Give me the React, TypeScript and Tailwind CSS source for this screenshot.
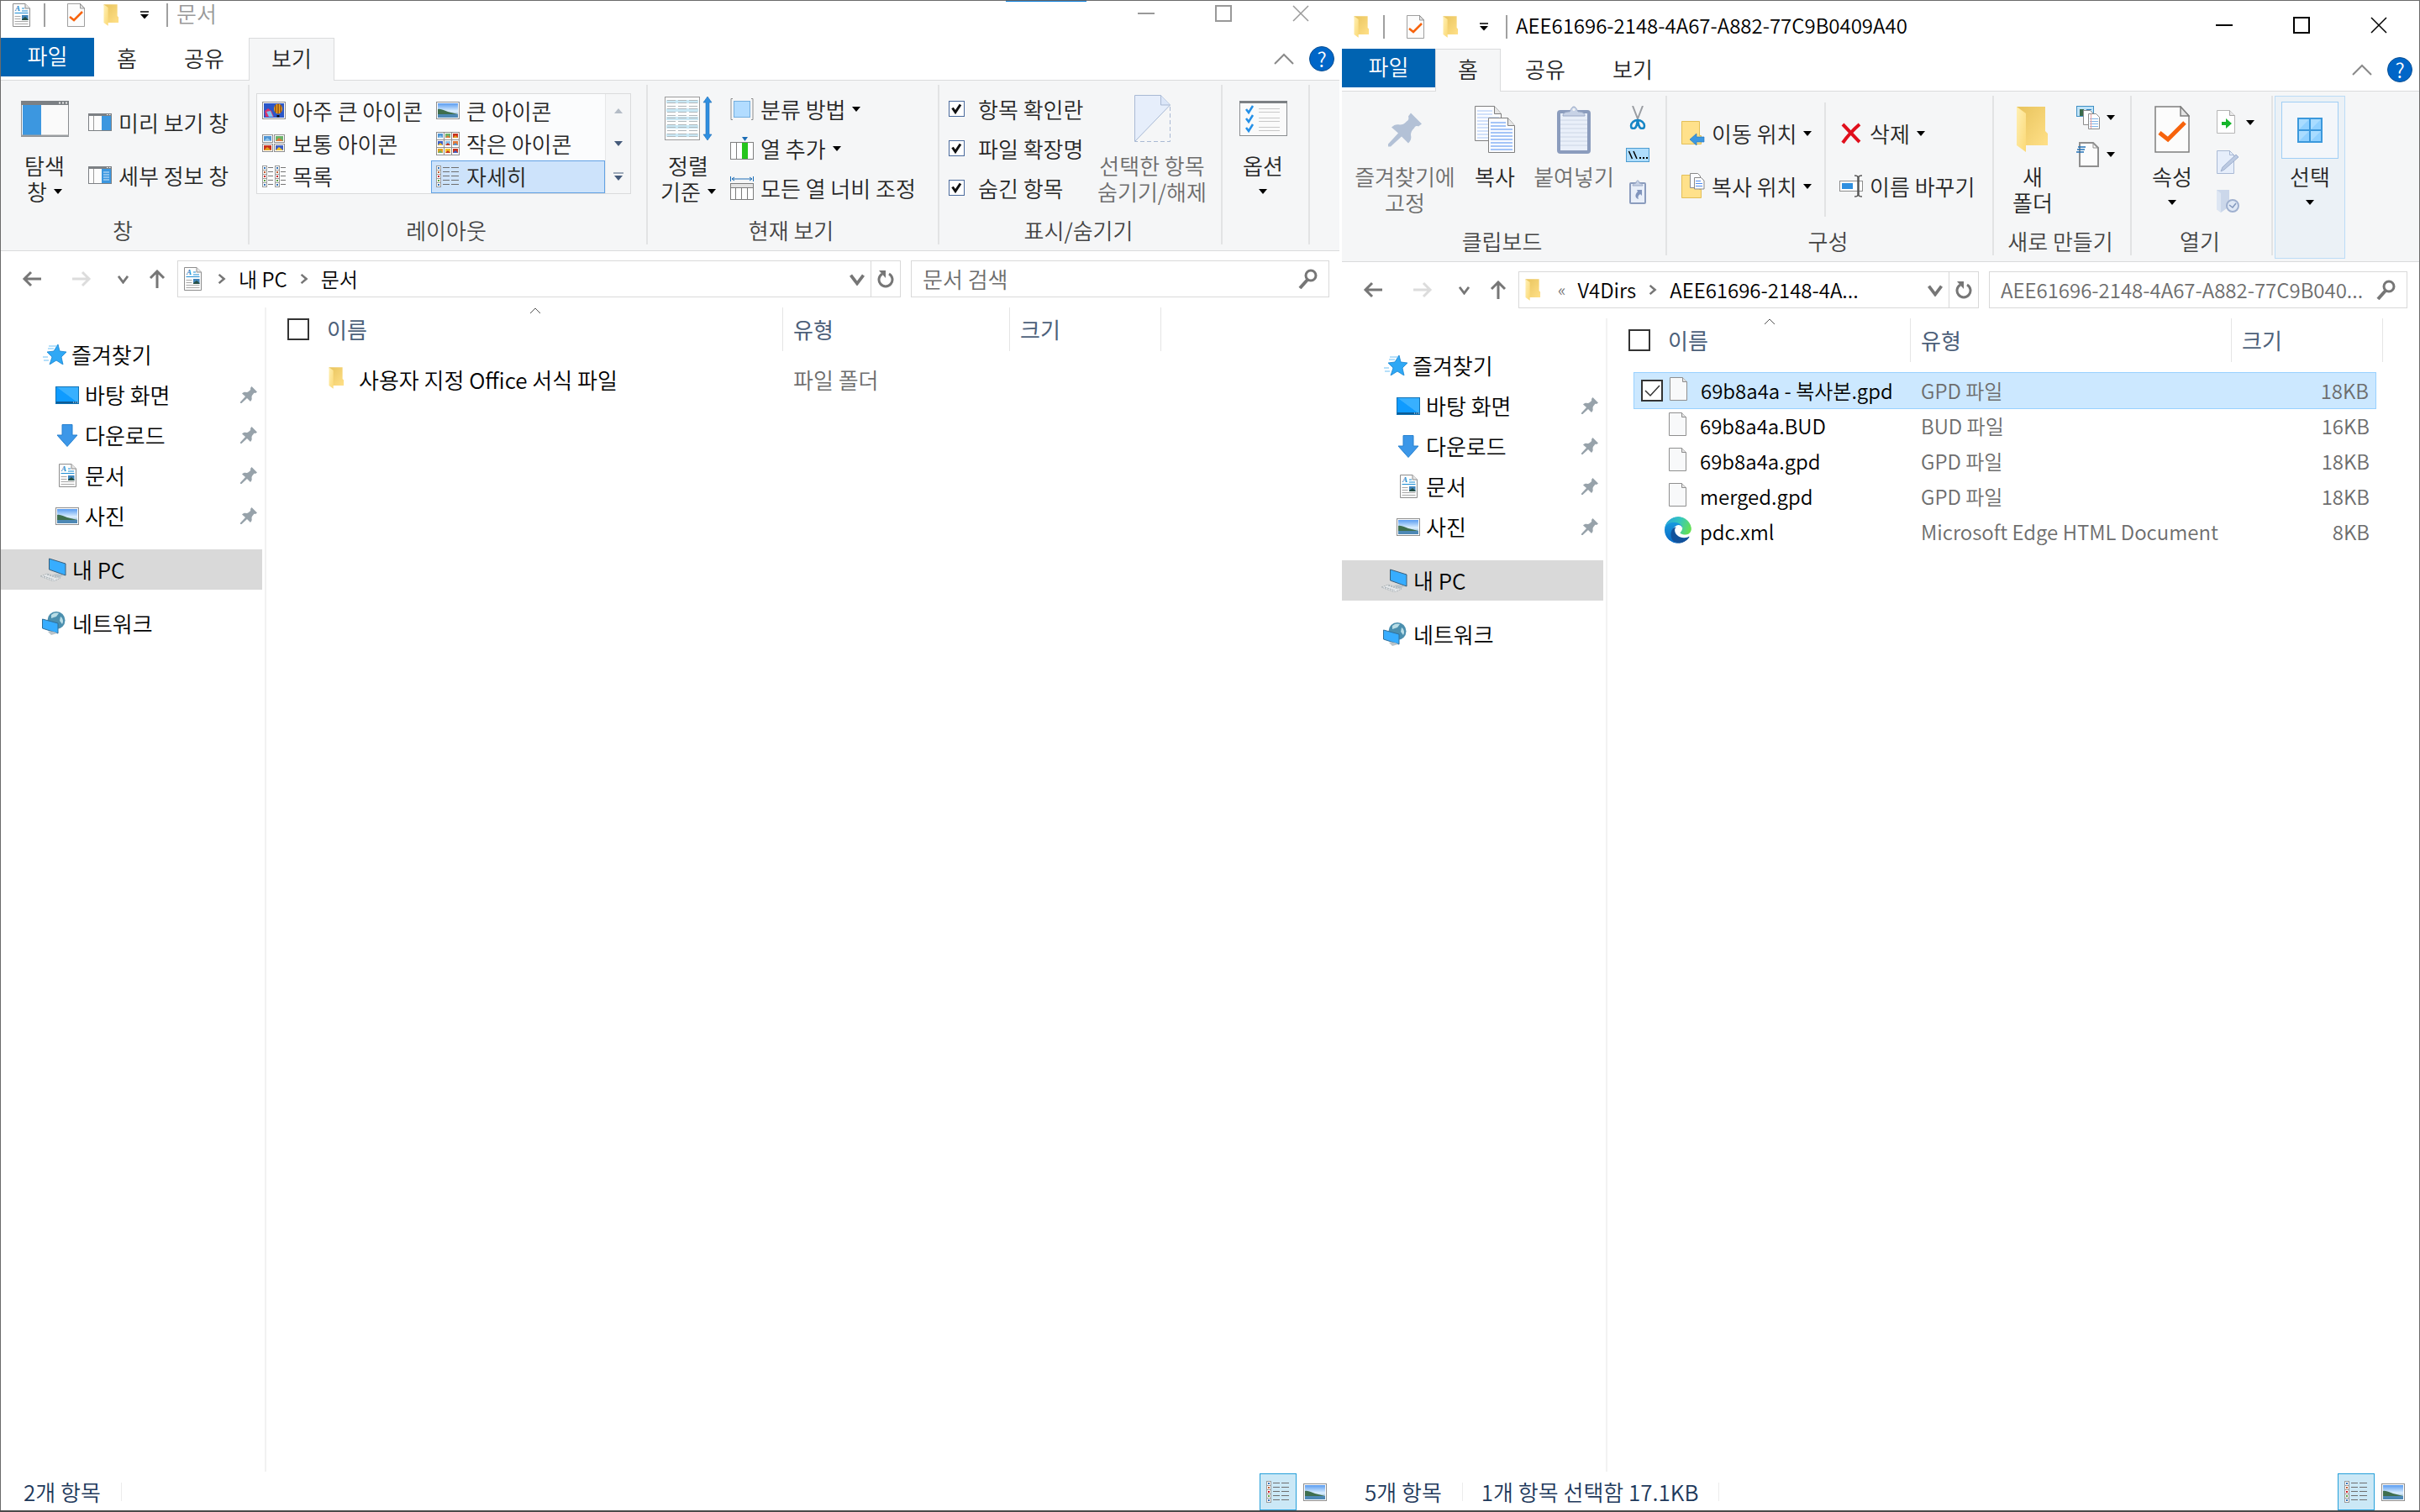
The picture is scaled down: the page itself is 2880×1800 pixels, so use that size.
import type { ReactNode } from "react"
import clsx from "clsx"

/* ---------- icons ---------- */

function Svg({ w, h, children }: { w: number; h: number; children: ReactNode }) {
  return (
    <svg width={w} height={h} viewBox={`0 0 ${w} ${h}`} fill="none" aria-hidden="true" className="shrink-0">
      {children}
    </svg>
  )
}

function Gradients() {
  return (
    <svg width="0" height="0" className="absolute" aria-hidden="true">
      <defs>
        <linearGradient id="sky" x1="0" y1="0" x2="0" y2="1">
          <stop offset="0" stopColor="#5a9cf0" />
          <stop offset="0.55" stopColor="#dcefff" />
          <stop offset="1" stopColor="#5f93bb" />
        </linearGradient>
        <linearGradient id="folder" x1="0" y1="0" x2="1" y2="1">
          <stop offset="0" stopColor="#e8c35c" />
          <stop offset="1" stopColor="#ffe088" />
        </linearGradient>
        <linearGradient id="flap" x1="0" y1="0" x2="1" y2="1">
          <stop offset="0" stopColor="#fff0b4" />
          <stop offset="1" stopColor="#fbd976" />
        </linearGradient>
        <linearGradient id="screen" x1="0" y1="1" x2="1" y2="0">
          <stop offset="0.5" stopColor="#0f9bff" />
          <stop offset="0.52" stopColor="#38b0ff" />
        </linearGradient>
        <linearGradient id="edge-top" x1="0" y1="0.3" x2="1" y2="0.6">
          <stop offset="0" stopColor="#2aa5dd" />
          <stop offset="0.5" stopColor="#35c7bd" />
          <stop offset="1" stopColor="#66e052" />
        </linearGradient>
        <linearGradient id="edge-body" x1="0" y1="0" x2="0" y2="1">
          <stop offset="0" stopColor="#1ba0e2" />
          <stop offset="1" stopColor="#0868c5" />
        </linearGradient>
        <clipPath id="edge-clip">
          <circle cx="128" cy="128" r="128" />
        </clipPath>
      </defs>
    </svg>
  )
}

function DocIcon() {
  return (
    <Svg w={21} h={28}>
      <path d="M.5.5H15L20.500 6V27.500H.5z" fill="#fdfdfd" stroke="#8d8d8d" />
      <path d="M15 .5V6h5.500" fill="#e8e8e8" stroke="#8d8d8d" />
      <text x="3" y="9" fontSize="9" fontStyle="italic" fontWeight="700" fontFamily="Liberation Serif, serif" fill="#1f86c9">
        A
      </text>
      <path d="M11 6h3M11 9h7M2.500 11.500h16" stroke="#1f8fd6" strokeWidth="1.2" />
      <path d="M2.500 15.500h7M2.500 18.500h7M2.500 21.500h16M2.500 24.500h16" stroke="#a9a9a9" />
      <rect x="11" y="14" width="7.500" height="6" fill="#3f83b8" />
      <path d="M11 19l4-3 3.500 3v1H11z" fill="#274f45" />
    </Svg>
  )
}

function CheckPageIcon({ w = 21, h = 28 }: { w?: number; h?: number }) {
  return (
    <svg width={w} height={h} viewBox="0 0 42 56" fill="none" aria-hidden="true" className="shrink-0">
      <path d="M1 1h30l10 11v43H1z" fill="#fcfcfc" stroke="#7f7f7f" strokeWidth="1.500" />
      <path d="M31 1v11h10z" fill="#e4e4e4" stroke="#7f7f7f" strokeWidth="1.500" />
      <path d="M6 32l10 8L36 20" stroke="#f7630c" strokeWidth="5" />
    </svg>
  )
}

function FolderIcon({ w = 19, h = 28 }: { w?: number; h?: number }) {
  return (
    <svg width={w} height={h} viewBox="0 0 40 56" fill="none" aria-hidden="true" className="shrink-0">
      <path d="M1 1h34v29l3 3v14H10z" fill="url(#folder)" />
      <path d="M1 1l11 8v46L1 47z" fill="url(#flap)" />
    </svg>
  )
}

function Caret() {
  return (
    <Svg w={10} h={6}>
      <path d="M0 0h10L5 6z" fill="#000" />
    </Svg>
  )
}

function QuickMenuIcon() {
  return (
    <Svg w={12} h={10}>
      <path d="M1 1h10" stroke="#000" strokeWidth="1.500" />
      <path d="M1 4h10L6 9.500z" fill="#000" />
    </Svg>
  )
}

function PaneIcon({ details }: { details?: boolean }) {
  return (
    <Svg w={28} h={21}>
      <rect x=".5" y=".5" width="27" height="20" fill="#fcfcfc" stroke="#7c8084" />
      <path d="M0 0h28v3H0z" fill="#7c8084" />
      <path d="M22 1.500h1.500M25 1.500h1.500" stroke="#fff" />
      <path d="M6.500 3v17" stroke="#9c9c9c" />
      <rect x="16" y="3" width="11" height="17" fill="#3c97e0" />
      {details && <path d="M18 7h7M18 10h7M18 13h7M18 16h7" stroke="#d5eafa" />}
    </Svg>
  )
}

function NavPaneIcon() {
  return (
    <Svg w={57} h={43}>
      <rect x=".5" y=".5" width="56" height="42" fill="#fafafa" stroke="#8a8d90" />
      <path d="M0 0h57v5H0z" fill="#7c8084" />
      <path d="M45 2.500h2M49 2.500h2M53 2.500h2" stroke="#e8e8e8" strokeWidth="2" />
      <rect x="2" y="5" width="22" height="36" fill="#3c97e0" />
      <path d="M0 41.500h57" stroke="#9a9da0" strokeWidth="2" />
    </Svg>
  )
}

function PhotoIcon() {
  return (
    <Svg w={28} h={21}>
      <rect x=".5" y=".5" width="27" height="20" fill="#fff" stroke="#8f8f8f" />
      <rect x="2" y="2" width="24" height="17" fill="url(#sky)" />
      <path d="M2 9c4-1 8 2 12 3l12 3H2z" fill="#3f6f4e" />
      <path d="M2 15h24v4H2z" fill="#4d88b5" />
    </Svg>
  )
}

function BalloonIcon() {
  return (
    <Svg w={28} h={21}>
      <rect x=".5" y=".5" width="27" height="20" fill="#fff" stroke="#8f8f8f" />
      <rect x="2" y="2" width="24" height="17" fill="#2a56c8" />
      <path d="M3 11l4-3 4 3 3 7H4z" fill="#d6336c" />
      <path d="M5 12l3 6h5l-3-7z" fill="#7cc4f2" />
      <ellipse cx="19" cy="8.500" rx="5" ry="6" fill="#f2a71b" />
      <path d="M19 2.500v12M16 4v9M22 4v9" stroke="#5a1c10" />
      <path d="M17.500 16h3v2.500h-3z" fill="#111" />
    </Svg>
  )
}

const thumbColors = ["#4f95d4", "#6bb36a", "#c8321e", "#3d5fc4", "#8fc4ea", "#e07a3a", "#e0a020", "#f2c230", "#c8321e"]

function MediumIcon() {
  return (
    <Svg w={28} h={21}>
      {[0, 1, 2, 3].map((i) => (
        <g key={i} transform={`translate(${(i % 2) * 14} ${Math.floor(i / 2) * 11})`}>
          <rect x=".5" y=".5" width="12" height="9" fill="#fff" stroke="#8f8f8f" />
          <rect x="2" y="2" width="9" height="6" fill={thumbColors[i]} />
          <path d="M2 8l4-4 5 4z" fill={thumbColors[i + 4]} />
        </g>
      ))}
    </Svg>
  )
}

function SmallGridIcon() {
  return (
    <Svg w={28} h={28}>
      <rect x=".5" y=".5" width="27" height="27" fill="#fff" stroke="#8f8f8f" />
      <path d="M9.500 0v28M18.500 0v28M0 9.500h28M0 18.500h28" stroke="#8f8f8f" />
      {thumbColors.map((color, i) => (
        <g key={i} transform={`translate(${(i % 3) * 9} ${Math.floor(i / 3) * 9})`}>
          <rect x="2" y="2" width="6" height="5" fill={color} />
          <path d="M2 7l3-3 3 3z" fill={thumbColors[(i + 4) % 9]} />
        </g>
      ))}
    </Svg>
  )
}

const bulletColors = ["#2f6fb5", "#c05a30", "#c8101c", "#56a040", "#2f6fb5"]

function Bullets({ x }: { x: number }) {
  return (
    <>
      <rect x={x + 0.5} y=".5" width="5" height="25" fill="#fff" stroke="#9a9a9a" />
      {bulletColors.map((color, i) => (
        <g key={i}>
          <path d={`M${x} ${i * 5 + 0.5}h6`} stroke="#9a9a9a" />
          <rect x={x + 2} y={i * 5 + 2} width="2" height="2" fill={color} />
        </g>
      ))}
    </>
  )
}

function ListIcon() {
  return (
    <Svg w={28} h={26}>
      <Bullets x={0} />
      <path d="M7 2.500h6M7 7.500h6M7 12.500h6M7 17.500h6M7 22.500h6" stroke="#777" />
      <Bullets x={15} />
      <path d="M22 2.500h6M22 7.500h6M22 12.500h6M22 17.500h6M22 22.500h6" stroke="#777" />
    </Svg>
  )
}

function DetailsIcon() {
  return (
    <Svg w={28} h={26}>
      <Bullets x={0} />
      <path
        d="M8 2.500h8M18 2.500h9M8 7.500h8M18 7.500h9M8 12.500h8M18 12.500h9M8 17.500h8M18 17.500h9M8 22.500h8M18 22.500h9"
        stroke="#6f6f6f"
      />
    </Svg>
  )
}

function SortIcon() {
  return (
    <Svg w={57} h={52}>
      <rect x=".5" y=".5" width="41" height="51" fill="#fcfcfc" stroke="#9b9b9b" />
      {[6, 16, 26, 36, 46].map((y) => (
        <path key={y} d={`M2 ${y}h38`} stroke="#c9e8f5" strokeWidth="4" />
      ))}
      {[4, 7, 11, 14, 18, 22, 25, 29, 33, 36, 40, 44, 47].map((y) => (
        <path key={y} d={`M3 ${y}.500h10M16 ${y}.500h10M29 ${y}.500h10`} stroke="#b0b8bc" />
      ))}
      <path d="M51 0l5 7h-3v38h3l-5 7-5-7h3V7h-3z" fill="#2f8fe0" stroke="#1c6db5" strokeWidth=".6" />
    </Svg>
  )
}

function GroupByIcon() {
  return (
    <Svg w={28} h={26}>
      <path d="M3 .5H1v25h2M25 .5h2v25h-2" stroke="#8c8c8c" />
      <rect x="4.500" y="3.500" width="19" height="19" fill="#b2dcff" stroke="#74aede" />
    </Svg>
  )
}

function AddColumnIcon() {
  return (
    <Svg w={28} h={27}>
      <path d="M14 0h7l-3.500 5z" fill="#1c6db5" />
      <rect x=".5" y="6.500" width="27" height="20" fill="#fff" stroke="#808080" />
      <path d="M7.500 7v19" stroke="#808080" />
      <rect x="14" y="7" width="7" height="19" fill="#25c51c" />
    </Svg>
  )
}

function FitColumnsIcon() {
  return (
    <Svg w={28} h={28}>
      <path d="M.5 0v6M27.500 0v6M2 3h24M5 1L2 3l3 2M23 1l3 2-3 2" stroke="#1c6db5" />
      <rect x=".5" y="8.500" width="27" height="19" fill="#fff" stroke="#7c7c7c" />
      <path d="M1 9h26v4H1z" fill="#e3e3e3" />
      <path d="M0 13.500h28M6.500 14v13M13.500 14v13M20.500 14v13" stroke="#7c7c7c" />
    </Svg>
  )
}

function HidePageIcon() {
  return (
    <Svg w={43} h={56}>
      <path d="M.5.5h31l11 11.500L.5 55.500z" fill="#e6eefb" stroke="#a9b9d4" />
      <path d="M31.500.5V12h11" fill="#dbe6f8" stroke="#a9b9d4" />
      <path d="M42.500 14v41.500H1" stroke="#a9b9d4" strokeDasharray="5 3" />
    </Svg>
  )
}

function OptionsIcon() {
  return (
    <Svg w={57} h={42}>
      <rect x=".5" y=".5" width="56" height="41" fill="#fafafa" stroke="#8a8d90" />
      <path d="M0 0h57v3H0z" fill="#7c8084" />
      {[10, 21, 32].map((y) => (
        <g key={y}>
          <path d={`M8 ${y}l3 4 5-8`} stroke="#2490e8" strokeWidth="2.500" />
          <path d={`M23 ${y - 1}.500h25M23 ${y + 3}.500h25`} stroke="#c8c8c8" />
        </g>
      ))}
    </Svg>
  )
}

function PinShape({ w, h, color }: { w: number; h: number; color: string }) {
  return (
    <svg width={w} height={h} viewBox="0 0 40 40" aria-hidden="true" className="shrink-0">
      <path
        d="M27 0l13 13-4 3c-3-1-4 0-5 2-3 3-4 5-4 8 1 4 0 7-3 10l-8-8L3 40H0v-3l12-13-8-7c3-3 6-4 10-3 3 0 5-1 8-4 2-1 3-3 2-6z"
        fill={color}
      />
    </svg>
  )
}

function CopyIcon() {
  return (
    <Svg w={48} h={56}>
      <path d="M.5.5h23l8 9v32H.5z" fill="#fbfcff" stroke="#7f7f7f" />
      <path d="M23.500.5v9h8" fill="#e6e6e6" stroke="#7f7f7f" />
      <path d="M3 6h18M3 10h18M3 14h26M3 18h26M3 22h13M3 26h13M3 30h13M3 34h13M3 38h13" stroke="#a7c5f5" />
      <path d="M16.500 14.500h23l8 9v32h-31z" fill="#fbfcff" stroke="#7f7f7f" />
      <path d="M39.500 14.500v9h8" fill="#e6e6e6" stroke="#7f7f7f" />
      <path d="M19 20h18M19 24h18M19 28h26M19 32h26M19 36h26M19 40h26M19 44h26M19 48h26M19 52h26" stroke="#4f8df0" />
    </Svg>
  )
}

function PasteIcon() {
  return (
    <Svg w={40} h={57}>
      <rect x="2" y="7" width="36" height="48" rx="2" fill="#e9eff9" stroke="#8b9cbd" strokeWidth="4" />
      <path d="M4 17h32M4 22h32M4 27h32M4 32h32M4 37h32M4 42h32M4 47h32" stroke="#ccd6e6" />
      <path d="M7 12c0-4 4-5 8-5 1-1 2-6 5-6s4 5 5 6c4 0 8 1 8 5z" fill="#c7d2e6" stroke="#9aa9c6" />
      <circle cx="20" cy="4.500" r="1.500" fill="#f5f6f7" />
    </Svg>
  )
}

function ScissorsIcon() {
  return (
    <Svg w={20} h={28}>
      <path d="M4 0l7 18M16 0L9 18" stroke="#9a9da2" strokeWidth="2" />
      <path d="M10 17c-4 0-8 3-8 7 0 2 1 3 3 3 4 0 4-6 5-10 1 4 1 10 5 10 2 0 3-1 3-3 0-4-4-7-8-7z" stroke="#1585c5" strokeWidth="2.500" />
    </Svg>
  )
}

function CopyPathIcon() {
  return (
    <Svg w={28} h={17}>
      <rect x=".5" y=".5" width="27" height="16" fill="#aeddfc" stroke="#4c9bd0" />
      <path d="M3.500 4l4 9M9 4l4 9" stroke="#000" strokeWidth="1.500" />
      <path d="M16 12h2M20 12h2M24 12h2" stroke="#000" strokeWidth="2" />
    </Svg>
  )
}

function PasteShortcutIcon() {
  return (
    <Svg w={20} h={29}>
      <rect x="1" y="4" width="18" height="24" rx="1" fill="#e9eff9" stroke="#8b9cbd" strokeWidth="2" />
      <path d="M4 7c0-2 3-3 4-3 0-2 1-3 2-3s2 1 2 3c1 0 4 1 4 3z" fill="#c7d2e6" stroke="#9aa9c6" />
      <path d="M9 12h6v7l-2-2c-3 2-3 4-2 6-4-1-5-5-1-9z" fill="#8195bd" />
    </Svg>
  )
}

function MoveToIcon() {
  return (
    <Svg w={28} h={29}>
      <path d="M.5.500h21v17h2v10H.5z" fill="#ffe18b" stroke="#e3bf57" />
      <path d="M10 22l8-7v4h9v6h-9v4z" fill="#3c97e0" stroke="#1f73bd" strokeWidth=".6" />
    </Svg>
  )
}

function CopyToIcon() {
  return (
    <Svg w={28} h={31}>
      <path d="M.5 2.500h21v17h2v10H.5z" fill="#ffe18b" stroke="#e3bf57" />
      <path d="M10.500.5h9l3 3v14h-12z" fill="#fbfcff" stroke="#888" />
      <path d="M15.500 5.500h8l3.500 3.500v10H15.500z" fill="#fbfcff" stroke="#888" />
      <path d="M17 9.500h6M17 12.500h8M17 15.500h8" stroke="#4f8df0" />
    </Svg>
  )
}

function DeleteIcon() {
  return (
    <Svg w={28} h={26}>
      <path d="M4 2c5 5 14 15 20 21M24 2C17 8 9 17 4 24" stroke="#e00f1c" strokeWidth="4" />
    </Svg>
  )
}

function RenameIcon() {
  return (
    <Svg w={28} h={27}>
      <rect x=".5" y="7.500" width="27" height="12" fill="#fff" stroke="#8c8c8c" />
      <rect x="3" y="10" width="13" height="7" fill="#2f8fe0" />
      <path d="M18 1c3 0 4 1 4 2v21c0 1-1 2-4 2M27 1c-3 0-4 1-4 2v21c0 1 1 2 4 2" stroke="#555" strokeWidth="1.500" />
    </Svg>
  )
}

function NewItemIcon() {
  return (
    <Svg w={28} h={28}>
      <rect x=".5" y=".5" width="20" height="12" fill="#bfe3f8" stroke="#3f8fc4" />
      <path d="M4 4h5v8H4z" fill="#3b6b4a" />
      <path d="M12 4.500h6" stroke="#2a7fc0" />
      <path d="M8.500 5.500h8l4 4v13h-12z" fill="#fff" stroke="#8c8c8c" />
      <path d="M14.500 9.500h9l4 4v14h-13z" fill="#fff" stroke="#8c8c8c" />
      <path d="M16 15.500h10M16 18.500h10M16 21.500h10M16 24.500h10" stroke="#7fb2e6" />
      <path d="M17.500 10v17" stroke="#eca0a0" />
    </Svg>
  )
}

function EasyAccessIcon() {
  return (
    <Svg w={28} h={30}>
      <path d="M4 1h16l6 6v22H4z" fill="#fcfcfc" stroke="#8f8f8f" strokeWidth="2" />
      <path d="M20 1v6h6" stroke="#8f8f8f" />
      <path d="M2 6h9M1 9h9M0 12h9" stroke="#2272b8" strokeWidth="1.500" />
    </Svg>
  )
}

function OpenIcon() {
  return (
    <Svg w={28} h={29}>
      <path d="M1.500.5h15l6 6v21h-21z" fill="#fff" stroke="#b5b5b5" />
      <path d="M16.500.5v6h6" fill="#e8e8e8" stroke="#a5a5a5" />
      <path d="M7 14h5v-4l7 6-7 6v-4H7z" fill="#16b52b" />
    </Svg>
  )
}

function EditIcon() {
  return (
    <Svg w={28} h={28}>
      <path d="M1.500.5h15l5 5v22h-20z" fill="#e6eefb" stroke="#a9b9d4" />
      <path d="M16.500.5v5h5" stroke="#a9b9d4" />
      <path d="M6 25l2-5L24 5l3 3L10 23z" fill="#bccae2" stroke="#9fb0cf" />
    </Svg>
  )
}

function HistoryIcon() {
  return (
    <Svg w={28} h={28}>
      <path d="M1 0h15v20l-10 7-5-4z" fill="#cbd7ea" />
      <path d="M1 0l5 4v23l-5-4z" fill="#dde6f3" />
      <circle cx="20" cy="19" r="7" fill="#dfe8f5" stroke="#9fb0cf" strokeWidth="2" />
      <path d="M16 18l4 3 4-5" stroke="#8297bd" strokeWidth="1.500" />
    </Svg>
  )
}

function SelectIcon() {
  return (
    <Svg w={30} h={30}>
      <rect width="30" height="30" fill="#3b98dc" />
      <path d="M2 2h12v12H2zM16 2h12v12H16zM2 16h12v12H2zM16 16h12v12H16z" fill="#a9dcff" />
      <path d="M2 14L14 2v12zM16 14L28 2v12zM2 28l12-12v12zM16 28l12-12v12z" fill="#8fd0ff" />
    </Svg>
  )
}

function StarIcon() {
  return (
    <Svg w={28} h={24}>
      <path d="M18 0l2 8 8 1-6 6 2 9-8-5-8 5 3-9-6-6 8-1z" fill="#2fa8f5" stroke="#1583d0" strokeWidth=".8" />
      <path d="M7 2h10M6 5h7M0 15h6M1 19h6" stroke="#6cc0f5" />
    </Svg>
  )
}

function DesktopIcon() {
  return (
    <Svg w={28} h={21}>
      <rect x=".5" y=".5" width="27" height="20" fill="url(#screen)" stroke="#1072b5" />
      <path d="M1 19h26" stroke="#0c5c96" strokeWidth="2" />
      <path d="M21 19h1M23.500 19h1M26 19h1" stroke="#fff" />
    </Svg>
  )
}

function DownloadIcon() {
  return (
    <Svg w={28} h={27}>
      <path d="M8 .5h12V13h6L14 26.500 2 13h6z" fill="#3c97e8" stroke="#2680cf" />
    </Svg>
  )
}

function PcIcon() {
  return (
    <Svg w={32} h={28}>
      <path d="M10.500 1l19.500 6v14L10.500 14z" fill="#37adff" stroke="#3b5f7a" />
      <path d="M11 14L30 1v6L11 14z" fill="#5cbcff" opacity="0" />
      <path d="M15 20c5-2 10 0 13 1l-7 3z" fill="#b9c3c9" />
      <path d="M0 22l8-3 16 5-8 4z" fill="#e4e7e9" stroke="#9ea6ab" strokeWidth=".8" strokeDasharray="2 1" />
      <path d="M4 22l12 4M8 20l12 4" stroke="#a2aaaf" strokeDasharray="2 1" />
    </Svg>
  )
}

function NetworkIcon() {
  return (
    <Svg w={30} h={28}>
      <ellipse cx="17" cy="10.500" rx="10.500" ry="10.500" fill="#4b8fae" />
      <path d="M11 4c3-3 7-3 9-2l-3 4-6 2zM22 6c3 2 4 6 2 9l-3-4z" fill="#b9dde6" />
      <path d="M.5 9L19 14v12L.5 20z" fill="#37adff" stroke="#2f6f9a" />
      <path d="M7 24c4-1 9 0 11 2l-7 2z" fill="#b9c3c9" />
    </Svg>
  )
}

function FileIcon() {
  return (
    <Svg w={21} h={28}>
      <path d="M.5.500h15l5 5v22H.5z" fill="#f8f9fa" stroke="#8f8f8f" />
      <path d="M15.500.5v5h5" fill="#e3e3e3" stroke="#8f8f8f" />
    </Svg>
  )
}

function EdgeIcon() {
  return (
    <svg width="32" height="32" viewBox="0 0 256 256" aria-hidden="true" className="shrink-0">
      <g clipPath="url(#edge-clip)">
        <path
          d="M105.700 241.400a79.200 79.200 0 0 1-22.700-21.300c-29.700-40.600-20.800-97.700 19.900-127.400 4.300-3.100 8.700-5.700 13.400-8 3.400-1.600 9.300-4.600 17.100-4.500 11.200.1 21.600 5.400 28.300 14.300 4.400 5.900 6.900 13.100 7 20.600 0-.2 27-87.800-87.900-87.800-48.300 0-88 45.900-88 86.100-.2 21.300 4.300 42.400 13.300 61.700 30 63.900 102.500 94.900 169.400 72.600a84.200 84.200 0 0 1-69.800-6.300z"
          fill="url(#edge-body)"
        />
        <path
          d="M231 190.500c-3.400 1.800-6.900 3.400-10.500 4.700a101.300 101.300 0 0 1-35.600 6.400c-47 0-87.900-32.300-87.900-73.800.1-11.300 6.300-21.700 16.300-27.100-42.500 1.800-53.400 46.100-53.400 72 0 73.400 67.600 80.800 82.200 80.800 7.900 0 19.700-2.300 26.800-4.600l1.300-.4a127.700 127.700 0 0 0 66.500-52.800c1-1.500.4-3.600-1.100-4.500-1.400-.8-3.100-.8-4.600-.7z"
          fill="#12529c"
        />
        <path
          d="M152.300 148.900c-.9 1.200-3.600 2.700-3.600 6.100 0 2.800 1.800 5.500 5.100 7.700 15.300 10.700 44.200 9.200 44.300 9.200 11.400 0 22.500-3.100 32.200-8.900C246 154 256 132 256 107c.2-24-8.500-39.900-12.100-46.900C221 15.600 178 0 128 0A128 128 0 0 0 0 126.200c.5-40.200 40.500-72.700 88-72.700 3.900 0 25.800.4 46.200 11.100 18 9.400 27.400 20.800 33.900 32.100 6.800 11.700-5 40-15.800 52.200z"
          fill="url(#edge-top)"
        />
      </g>
    </svg>
  )
}

function Chevron({ dir, w, h }: { dir: "down" | "right"; w: number; h: number }) {
  const d = { down: "M1 2l6 8 6-8", right: "M3 0l7 6-7 6" }[dir]
  return (
    <svg width={w} height={h} viewBox="0 0 14 12" fill="none" aria-hidden="true" className="shrink-0">
      <path d={d} stroke="#767676" strokeWidth="3" />
    </svg>
  )
}

function ArrowIcon({ dir, color = "#767676" }: { dir: "left" | "right" | "up"; color?: string }) {
  const d = {
    left: "M11 3l-8 8 8 8M3 11h20",
    right: "M13 3l8 8-8 8M1 11h20",
    up: "M4 10l8-8 8 8M12 2v20",
  }[dir]
  return (
    <Svg w={24} h={22}>
      <path d={d} stroke={color} strokeWidth="3" />
    </Svg>
  )
}

/* ---------- ribbon parts ---------- */

function BigButton({
  icon,
  lines,
  caret,
  disabled,
  className,
}: {
  icon: ReactNode
  lines: string[]
  caret?: "inline" | "below"
  disabled?: boolean
  className?: string
}) {
  return (
    <button type="button" className={clsx("flex shrink-0 flex-col items-center", disabled ? "text-[#6d6d6d]" : "text-[#262626]", className)}>
      <span className="flex h-20 items-center">{icon}</span>
      {lines.map((line, i) => (
        <span key={line} className="flex items-center gap-2 leading-[31px] whitespace-nowrap">
          {line}
          {caret === "inline" && i === lines.length - 1 && <Caret />}
        </span>
      ))}
      {caret === "below" && (
        <span className="flex h-[31px] items-center">
          <Caret />
        </span>
      )}
    </button>
  )
}

function SmallButton({ icon, label, caret, className }: { icon: ReactNode; label: string; caret?: boolean; className?: string }) {
  return (
    <button type="button" className={clsx("flex shrink-0 items-center gap-2 whitespace-nowrap text-[#262626]", className)}>
      {icon}
      {label}
      {caret && <Caret />}
    </button>
  )
}

function IconButton({ icon, label, caret, className }: { icon: ReactNode; label: string; caret?: boolean; className?: string }) {
  return (
    <button type="button" aria-label={label} className={clsx("flex items-center gap-2", className)}>
      {icon}
      {caret && <Caret />}
    </button>
  )
}

function Group({ label, className, children }: { label?: string; className?: string; children: ReactNode }) {
  return (
    <div className={clsx("flex h-[190px] shrink-0 flex-col border-r-2 border-[#e2e3e4]", className)}>
      <div className="flex min-h-0 flex-1">{children}</div>
      <div className="h-[34px] pr-1 text-center leading-[34px] text-[#444]">{label}</div>
    </div>
  )
}

function RibbonCheck({ label }: { label: string }) {
  return (
    <label className="flex h-[47px] items-center gap-4 whitespace-nowrap text-[#262626]">
      <span className="grid place-items-center">
        <input type="checkbox" defaultChecked className="col-start-1 row-start-1 size-[19px] appearance-none border border-[#4a6a9c] bg-white" />
        <svg width="19" height="19" viewBox="0 0 19 19" fill="none" aria-hidden="true" className="pointer-events-none col-start-1 row-start-1">
          <path d="M4.500 8.500l3.500 5 6-9" stroke="#111" strokeWidth="3" />
        </svg>
      </span>
      {label}
    </label>
  )
}

const galleryItems = [
  { label: "아주 큰 아이콘", icon: <BalloonIcon /> },
  { label: "큰 아이콘", icon: <PhotoIcon /> },
  { label: "보통 아이콘", icon: <MediumIcon /> },
  { label: "작은 아이콘", icon: <SmallGridIcon /> },
  { label: "목록", icon: <ListIcon /> },
  { label: "자세히", icon: <DetailsIcon />, active: true },
]

function ViewRibbon() {
  return (
    <>
      <Group label="창" className="w-[296px]">
        <BigButton icon={<NavPaneIcon />} lines={["탐색", "창"]} caret="inline" className="ml-2 w-[88px]" />
        <div className="flex flex-col pt-[13px] pl-2">
          <SmallButton icon={<PaneIcon />} label="미리 보기 창" className="h-[63px]" />
          <SmallButton icon={<PaneIcon details />} label="세부 정보 창" className="h-[63px]" />
        </div>
      </Group>
      <Group label="레이아웃" className="w-[474px]">
        <div className="mt-[10px] ml-2 flex h-[120px] w-[446px] border border-[#dadbdc] bg-[#fbfcfd]">
          <div className="grid flex-1 grid-cols-2 grid-rows-3">
            {galleryItems.map(({ label, icon, active }) => (
              <button
                type="button"
                key={label}
                className={clsx(
                  "flex items-center gap-2 border pl-[5px] whitespace-nowrap text-[#262626]",
                  active ? "border-[#62a2e4] bg-[#cde3fb]" : "border-transparent"
                )}
              >
                {icon}
                {label}
              </button>
            ))}
          </div>
          <div className="grid w-[30px] grid-rows-3 border-l border-[#e6e7e8] bg-[#f5f6f7]">
            <button type="button" aria-label="위로" className="grid place-items-center">
              <Svg w={10} h={6}>
                <path d="M0 6h10L5 0z" fill="#b4bcc6" />
              </Svg>
            </button>
            <button type="button" aria-label="아래로" className="grid place-items-center">
              <Svg w={10} h={6}>
                <path d="M0 0h10L5 6z" fill="#445a7a" />
              </Svg>
            </button>
            <button type="button" aria-label="자세히 보기" className="grid place-items-center">
              <Svg w={12} h={10}>
                <path d="M0 1h12" stroke="#445a7a" />
                <path d="M1 4h10L6 10z" fill="#445a7a" />
              </Svg>
            </button>
          </div>
        </div>
      </Group>
      <Group label="현재 보기" className="w-[347px]">
        <BigButton icon={<SortIcon />} lines={["정렬", "기준"]} caret="inline" className="ml-1 w-[88px]" />
        <div className="flex flex-col pt-[5px] pl-[6px]">
          <SmallButton icon={<GroupByIcon />} label="분류 방법" caret className="h-[47px]" />
          <SmallButton icon={<AddColumnIcon />} label="열 추가" caret className="h-[47px]" />
          <SmallButton icon={<FitColumnsIcon />} label="모든 열 너비 조정" className="h-[47px]" />
        </div>
      </Group>
      <Group label="표시/숨기기" className="w-[337px]">
        <div className="flex w-[178px] flex-col pt-[5px] pl-[11px]">
          <RibbonCheck label="항목 확인란" />
          <RibbonCheck label="파일 확장명" />
          <RibbonCheck label="숨긴 항목" />
        </div>
        <BigButton icon={<HidePageIcon />} lines={["선택한 항목", "숨기기/해제"]} disabled className="w-[150px]" />
      </Group>
      <Group className="w-[104px]">
        <BigButton icon={<OptionsIcon />} lines={["옵션"]} caret="below" className="w-[96px]" />
      </Group>
    </>
  )
}

function HomeRibbon() {
  return (
    <>
      <Group label="클립보드" className="w-[387px]">
        <BigButton icon={<PinShape w={40} h={41} color="#b3c1d6" />} lines={["즐겨찾기에", "고정"]} disabled className="ml-3 w-[126px]" />
        <BigButton icon={<CopyIcon />} lines={["복사"]} className="w-[88px]" />
        <BigButton icon={<PasteIcon />} lines={["붙여넣기"]} disabled className="w-[100px]" />
        <div className="flex w-[52px] flex-col items-center pt-1">
          <IconButton icon={<ScissorsIcon />} label="잘라내기" className="h-11" />
          <IconButton icon={<CopyPathIcon />} label="경로 복사" className="h-11" />
          <IconButton icon={<PasteShortcutIcon />} label="바로 가기 붙여넣기" className="h-11" />
        </div>
      </Group>
      <Group label="구성" className="w-[389px]">
        <div className="mt-2 flex h-[136px] w-[189px] flex-col border-r-2 border-[#e2e3e4] pt-[5px] pl-[17px]">
          <SmallButton icon={<MoveToIcon />} label="이동 위치" caret className="h-[63px]" />
          <SmallButton icon={<CopyToIcon />} label="복사 위치" caret className="h-[63px]" />
        </div>
        <div className="flex flex-col pt-[13px] pl-4">
          <SmallButton icon={<DeleteIcon />} label="삭제" caret className="h-[63px]" />
          <SmallButton icon={<RenameIcon />} label="이름 바꾸기" className="h-[63px]" />
        </div>
      </Group>
      <Group label="새로 만들기" className="w-[164px]">
        <BigButton icon={<FolderIcon w={40} h={56} />} lines={["새", "폴더"]} className="w-[92px]" />
        <div className="flex flex-col pt-1 pl-[6px]">
          <IconButton icon={<NewItemIcon />} label="새 항목" caret className="h-11" />
          <IconButton icon={<EasyAccessIcon />} label="빠른 연결" caret className="h-11" />
        </div>
      </Group>
      <Group label="열기" className="w-[168px]">
        <BigButton icon={<CheckPageIcon w={42} h={56} />} lines={["속성"]} caret="below" className="ml-[2px] w-[92px]" />
        <div className="flex flex-col pt-2 pl-[6px]">
          <IconButton icon={<OpenIcon />} label="열기" caret className="h-[47px]" />
          <IconButton icon={<EditIcon />} label="편집" className="h-[47px]" />
          <IconButton icon={<HistoryIcon />} label="히스토리" className="h-[47px]" />
        </div>
      </Group>
      <button
        type="button"
        className="ml-[2px] flex h-[194px] w-[84px] shrink-0 flex-col items-center border border-[#bcdcf6] bg-[#ebf1f6] pt-[6px] leading-[31px] text-[#262626]"
      >
        <span className="grid size-[68px] place-items-center border border-[#a0cef5] bg-[#f3f6fa]">
          <SelectIcon />
        </span>
        <span className="pt-[5px]">선택</span>
        <span className="flex h-[31px] items-center">
          <Caret />
        </span>
      </button>
    </>
  )
}

/* ---------- window parts ---------- */

function TitleBar({ icon, title, active }: { icon: ReactNode; title: string; active?: boolean }) {
  const stroke = active ? "#000" : "#999"
  return (
    <header className={clsx("flex shrink-0 items-center pr-[38px] pl-[14px]", active ? "h-[57px] pt-1" : "h-11 pb-[10px]")}>
      {icon}
      <span className="ml-4 h-7 w-[2px] bg-[#a0a0a0]" />
      <span className="ml-[26px]">
        <CheckPageIcon />
      </span>
      <span className="ml-[22px]">
        <FolderIcon />
      </span>
      <button type="button" aria-label="빠른 실행 도구 모음 사용자 지정" className="ml-6">
        <QuickMenuIcon />
      </button>
      <span className="ml-5 h-7 w-[2px] bg-[#a0a0a0]" />
      <h1 className={clsx("ml-[10px] pb-1 whitespace-nowrap", active ? "text-[24px] text-black" : "text-[#999]")}>{title}</h1>
      <div className="ml-auto flex items-center gap-[72px] pb-1">
        <button type="button" aria-label="최소화">
          <Svg w={20} h={20}>
            <path d="M0 10h20" stroke={stroke} strokeWidth="2" />
          </Svg>
        </button>
        <button type="button" aria-label="최대화">
          <Svg w={20} h={20}>
            <path d="M1 1h18v18H1z" stroke={stroke} strokeWidth="2" />
          </Svg>
        </button>
        <button type="button" aria-label="닫기">
          <Svg w={20} h={20}>
            <path d="M1 1l18 18M19 1L1 19" stroke={stroke} strokeWidth="1.500" />
          </Svg>
        </button>
      </div>
    </header>
  )
}

const tabs = [
  { label: "홈", width: "w-[78px]" },
  { label: "공유", width: "w-[106px]" },
  { label: "보기", width: "w-[102px]" },
]

function TabBar({ current }: { current: string }) {
  return (
    <nav className="relative z-10 -mb-px flex h-[51px] shrink-0 items-start pr-2">
      <button type="button" className="h-[46px] w-[111px] bg-[#0063b1] pb-1 text-white">
        파일
      </button>
      {tabs.map(({ label, width }) => (
        <button
          type="button"
          key={label}
          className={clsx(
            "h-[51px] border border-b-0 pb-1 text-[#262626]",
            width,
            label === current ? "border-[#dadbdc] bg-[#f5f6f7]" : "border-transparent"
          )}
        >
          {label}
        </button>
      ))}
      <div className="mt-[10px] ml-auto flex items-center gap-[18px]">
        <button type="button" aria-label="리본 최소화">
          <Svg w={24} h={16}>
            <path d="M1 14L12 3l11 11" stroke="#8a8a8a" strokeWidth="2" />
          </Svg>
        </button>
        <button type="button" aria-label="도움말" className="size-[30px] rounded-full border border-[#0a4f92] bg-[#0066c8] text-[24px] leading-[26px] text-white">
          ?
        </button>
      </div>
    </nav>
  )
}

function AddressRow({ icon, crumbs, collapsed, search }: { icon: ReactNode; crumbs: string[]; collapsed?: boolean; search: string }) {
  return (
    <div className="mt-[11px] mb-3 flex h-11 shrink-0 items-stretch pr-[14px] pl-2">
      <button type="button" aria-label="뒤로" className="grid w-[58px] place-items-center">
        <ArrowIcon dir="left" />
      </button>
      <button type="button" aria-label="앞으로" className="grid w-[60px] place-items-center">
        <ArrowIcon dir="right" color="#dcdcdc" />
      </button>
      <button type="button" aria-label="최근 위치" className="grid w-[38px] place-items-center">
        <Chevron dir="down" w={13} h={11} />
      </button>
      <button type="button" aria-label="위로" className="grid w-[44px] place-items-center">
        <ArrowIcon dir="up" />
      </button>
      <div className="ml-[2px] flex min-w-0 flex-1 items-center border border-[#d9d9d9] pl-[7px]">
        {icon}
        {collapsed ? (
          <span className="pl-5 text-[20px] text-[#767676]">«</span>
        ) : (
          <span className="pl-[18px]">
            <Chevron dir="right" w={12} h={14} />
          </span>
        )}
        {crumbs.map((crumb, i) => (
          <span key={crumb} className="flex items-center gap-[14px] pl-[14px] text-[24px] whitespace-nowrap text-black">
            {i > 0 && <Chevron dir="right" w={12} h={14} />}
            {crumb}
          </span>
        ))}
        <button type="button" aria-label="이전 위치" className="ml-auto grid h-full w-8 place-items-center">
          <Chevron dir="down" w={20} h={15} />
        </button>
        <button type="button" aria-label="새로 고침" className="grid h-full w-[35px] shrink-0 place-items-center border-l border-[#d9d9d9]">
          <Svg w={20} h={22}>
            <path d="M14 5a8 8 0 1 1-8 0" stroke="#767676" strokeWidth="3" />
            <path d="M2 1h8v9z" fill="#767676" />
          </Svg>
        </button>
      </div>
      <label className="ml-3 flex w-[498px] shrink-0 items-center border border-[#d9d9d9] pr-3 pl-[13px]">
        <input
          type="text"
          aria-label={search}
          placeholder={search}
          className={clsx("min-w-0 flex-1 bg-transparent outline-none placeholder:text-[#6d6d6d] placeholder:opacity-100", collapsed && "text-[24px]")}
        />
        <Svg w={24} h={24}>
          <circle cx="15" cy="8" r="6" stroke="#767676" strokeWidth="3" />
          <path d="M11 13L2 23" stroke="#767676" strokeWidth="4" />
        </Svg>
      </label>
    </div>
  )
}

const pinned = [
  { label: "바탕 화면", icon: <DesktopIcon /> },
  { label: "다운로드", icon: <DownloadIcon /> },
  { label: "문서", icon: <DocIcon /> },
  { label: "사진", icon: <PhotoIcon /> },
]

function Sidebar() {
  return (
    <aside className="w-[316px] shrink-0 border-r-2 border-[#f2f2f2] pt-8 text-black">
      <a href="#quick" className="flex h-12 items-center gap-1 pl-[50px]">
        <span className="w-[30px]">
          <StarIcon />
        </span>
        즐겨찾기
      </a>
      {pinned.map(({ label, icon }) => (
        <a key={label} href={`#${label}`} className="flex h-12 items-center pr-[9px] pl-[64px]">
          <span className="mr-[6px] grid w-[30px] place-items-center">{icon}</span>
          {label}
          <span className="ml-auto">
            <PinShape w={20} h={20} color="#97a2aa" />
          </span>
        </a>
      ))}
      <a href="#pc" className="mt-4 mr-[3px] flex h-12 items-center gap-[6px] bg-[#d9d9d9] pl-[47px]">
        <PcIcon />내 PC
      </a>
      <a href="#network" className="mt-4 flex h-12 items-center gap-[6px] pl-[49px]">
        <NetworkIcon />
        네트워크
      </a>
    </aside>
  )
}

function Tick({ label, checked }: { label: string; checked?: boolean }) {
  return (
    <span className="grid shrink-0 place-items-center">
      <input
        type="checkbox"
        aria-label={label}
        defaultChecked={checked}
        className="col-start-1 row-start-1 size-[26px] appearance-none border-2 border-[#333] bg-white"
      />
      {checked && (
        <svg width="26" height="26" viewBox="0 0 26 26" fill="none" aria-hidden="true" className="pointer-events-none col-start-1 row-start-1">
          <path d="M5 13l6 6L22 7" stroke="#333" strokeWidth="1.500" />
        </svg>
      )}
    </span>
  )
}

type Entry = { name: string; type: string; size?: string; icon: ReactNode; selected?: boolean }

function FileTable({ entries, typeWidth, textSize }: { entries: Entry[]; typeWidth: string; textSize?: string }) {
  const heading = "h-[52px] border-r border-[#e5e5e5] p-0 text-left align-middle font-normal"
  return (
    <div className="min-w-0 flex-1 pl-[25px]">
      <table className="w-full table-fixed border-separate border-spacing-0">
        <colgroup>
          <col />
          <col className={typeWidth} />
          <col className="w-[180px]" />
        </colgroup>
        <thead>
          <tr className="text-[#4c607a]">
            <th className={clsx(heading, "relative")}>
              <span className="absolute top-0 left-1/2 -translate-x-1/2">
                <Svg w={14} h={8}>
                  <path d="M1 7l6-6 6 6" stroke="#555" />
                </Svg>
              </span>
              <div className="flex items-center gap-[21px]">
                <Tick label="모두 선택" />
                이름
              </div>
            </th>
            <th className={clsx(heading, "pl-3")}>유형</th>
            <th className={clsx(heading, "pl-3")}>크기</th>
          </tr>
          <tr aria-hidden="true">
            <td className="h-[13px] p-0" colSpan={3} />
          </tr>
        </thead>
        <tbody className={textSize}>
          {entries.map(({ name, type, size, icon, selected }) => {
            const cell = clsx("-my-px flex h-11 items-center whitespace-nowrap", selected && "border-y border-[#99d1ff] bg-[#cce8ff]")
            return (
              <tr key={name}>
                <td className="h-[42px] p-0">
                  <div className={clsx(cell, "ml-[6px] text-black", selected && "border-l")}>
                    <span className={clsx("w-[34px] shrink-0", selected && "pl-[7px]")}>{selected && <Tick label={name} checked />}</span>
                    <span className="mr-2 grid w-[37px] shrink-0 place-items-center pb-1">{icon}</span>
                    {name}
                  </div>
                </td>
                <td className="p-0 text-[#6d6d6d]">
                  <div className={clsx(cell, "pl-3")}>{type}</div>
                </td>
                <td className="p-0 text-[#6d6d6d]">
                  <div className={clsx(cell, "mr-2 justify-end pr-2", selected && "border-r")}>{size}</div>
                </td>
              </tr>
            )
          })}
        </tbody>
      </table>
    </div>
  )
}

function StatusBar({ items }: { items: string[] }) {
  return (
    <footer className="flex h-[46px] shrink-0 items-end pr-[17px] pl-[27px] text-[#1e395b]">
      {items.map((item) => (
        <span key={item} className="mb-[6px] flex items-center leading-8 whitespace-nowrap">
          {item}
          <span className="mr-[22px] ml-6 h-[22px] w-px bg-[#ececec]" />
        </span>
      ))}
      <div className="ml-auto flex h-11 items-center gap-2">
        <button type="button" aria-label="자세히 보기" className="grid h-11 w-[44px] place-items-center border border-[#26a0da] bg-[#cbe8f6]">
          <DetailsIcon />
        </button>
        <button type="button" aria-label="큰 미리 보기">
          <PhotoIcon />
        </button>
      </div>
    </footer>
  )
}

const documents: Entry[] = [{ name: "사용자 지정 Office 서식 파일", type: "파일 폴더", icon: <FolderIcon /> }]

const driverFiles: Entry[] = [
  { name: "69b8a4a - 복사본.gpd", type: "GPD 파일", size: "18KB", icon: <FileIcon />, selected: true },
  { name: "69b8a4a.BUD", type: "BUD 파일", size: "16KB", icon: <FileIcon /> },
  { name: "69b8a4a.gpd", type: "GPD 파일", size: "18KB", icon: <FileIcon /> },
  { name: "merged.gpd", type: "GPD 파일", size: "18KB", icon: <FileIcon /> },
  { name: "pdc.xml", type: "Microsoft Edge HTML Document", size: "8KB", icon: <EdgeIcon /> },
]

export default function App() {
  return (
    <div className="grid min-h-screen grid-cols-[133fr_107fr] border-t border-b-2 border-t-[#6b6b6b] border-b-[#4a4a4a] bg-white font-['Noto_Sans_CJK_KR','Noto_Sans',sans-serif] text-[26px] leading-8 font-[350]">
      <Gradients />

      <section className="relative flex min-w-0 flex-col border-l border-[#6b6b6b]">
        <span className="absolute top-0 left-3/4 h-px w-24 bg-[#0078d7]" />
        <TitleBar icon={<DocIcon />} title="문서" />
        <TabBar current="보기" />
        <div className="mr-[2px] flex h-[204px] shrink-0 border-y border-[#dadbdc] bg-[#f5f6f7] pt-[5px]">
          <ViewRibbon />
        </div>
        <AddressRow icon={<DocIcon />} crumbs={["내 PC", "문서"]} search="문서 검색" />
        <div className="flex flex-1">
          <Sidebar />
          <div className="flex min-w-0 flex-1 pr-[214px]">
            <FileTable entries={documents} typeWidth="w-[270px]" />
          </div>
        </div>
        <StatusBar items={["2개 항목"]} />
      </section>

      <section className="flex min-w-0 flex-col border-r border-l border-r-[#6b6b6b] border-l-white">
        <TitleBar icon={<FolderIcon />} title="AEE61696-2148-4A67-A882-77C9B0409A40" active />
        <TabBar current="홈" />
        <div className="flex h-[204px] shrink-0 border-y border-[#dadbdc] bg-[#f5f6f7] pt-[5px]">
          <HomeRibbon />
        </div>
        <AddressRow icon={<FolderIcon />} crumbs={["V4Dirs", "AEE61696-2148-4A..."]} collapsed search="AEE61696-2148-4A67-A882-77C9B040..." />
        <div className="flex flex-1">
          <Sidebar />
          <div className="flex min-w-0 flex-1 pr-[43px]">
            <FileTable entries={driverFiles} typeWidth="w-[382px]" textSize="text-[24px]" />
          </div>
        </div>
        <StatusBar items={["5개 항목", "1개 항목 선택함 17.1KB"]} />
      </section>
    </div>
  )
}
